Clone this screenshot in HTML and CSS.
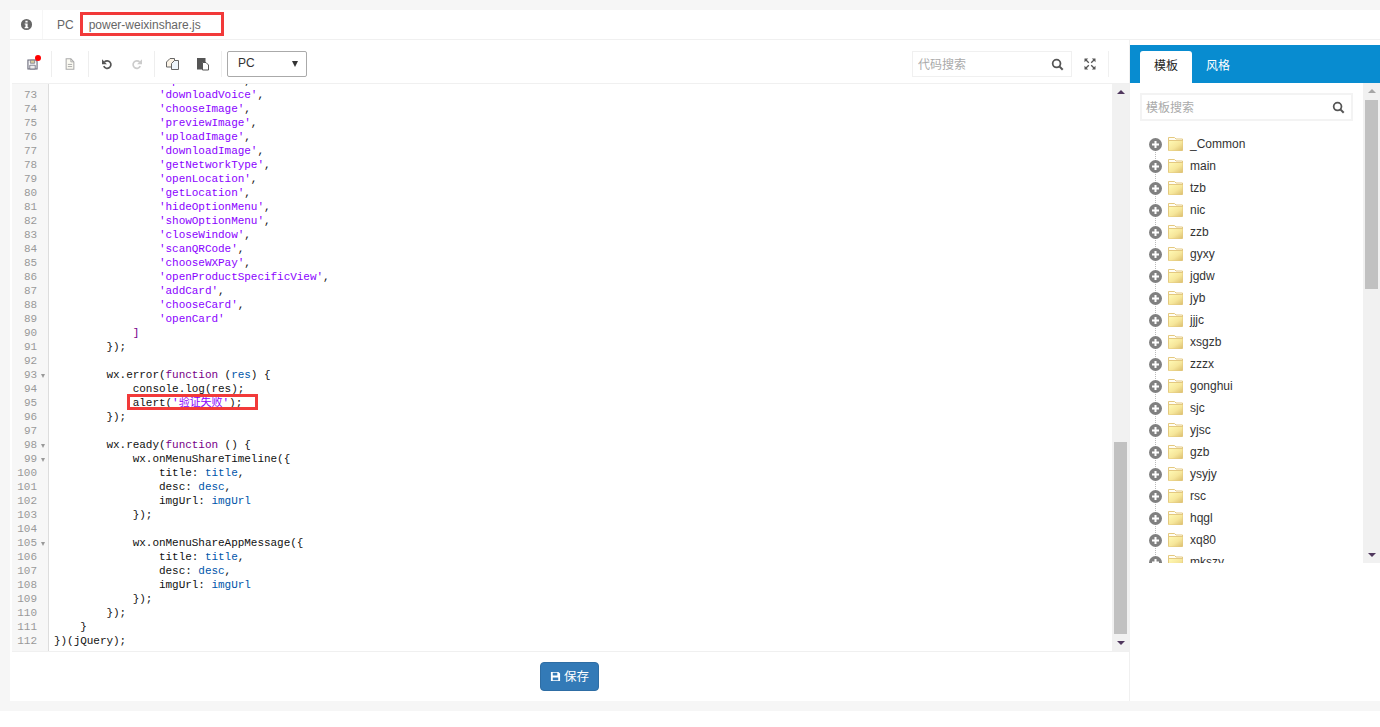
FILE: index.html
```html
<!DOCTYPE html>
<html lang="zh">
<head>
<meta charset="utf-8">
<title>power-weixinshare.js</title>
<link rel="stylesheet" href="styles.css">
</head>
<body>
<div class="page">
  <div class="card">
    <header class="topbar">
      <div class="info-cell">
        <svg class="ico-info" viewBox="0 0 14 14"><path fill="#666" fill-rule="evenodd" d="M7 1a6 6 0 1 1 0 12A6 6 0 0 1 7 1zM5.800 2.900v2h2.400v-2zM5 5.900v1.200h.9v2.600H5v1.400h4V9.700h-.8V5.900z"/></svg>
      </div>
      <span class="crumb">PC</span>
      <span class="crumb file">power-weixinshare.js</span>
    </header>
    <div class="body">
      <section class="left">
        <div class="toolbar">
          <div class="tgroup g-save">
            <span class="save-wrap">
              <svg class="ico-sm" viewBox="0 0 14 14"><path fill="#fff" stroke="#667" stroke-width="1.400" d="M1.200 1.200h9.800L12.800 3v9.800H1.200z"/><path fill="#d9cf9c" stroke="#778" d="M4.200 1.500h5.600v3.900H4.200z"/><path fill="#eee" stroke="#667" d="M3.500 7.900h7v4.800h-7z"/></svg>
              <i class="dot"></i>
            </span>
          </div>
          <div class="tgroup g-file">
            <svg class="ico-md" viewBox="0 0 14 14"><path fill="#fbfaf2" stroke="#aaa" stroke-width="1.200" d="M2.500 1h5.500l3.500 3.500V13h-9z"/><path fill="none" stroke="#aaa" stroke-width="1.100" d="M8 1v3.500h3.500M4.500 7.500h5M4.500 10h5"/></svg>
          </div>
          <div class="tgroup g-hist">
            <svg class="ico-md" viewBox="0 0 14 14"><path fill="none" stroke="#555" stroke-width="2" d="M4 4.600A4.400 4.400 0 1 1 3.200 9.600"/><path fill="#555" d="M1.200 1.500v5.700h5.700z"/></svg>
            <svg class="ico-md" viewBox="0 0 14 14"><path fill="none" stroke="#ccc" stroke-width="2" d="M10 4.600A4.400 4.400 0 1 0 10.800 9.600"/><path fill="#ccc" d="M12.800 1.500v5.700H7.100z"/></svg>
          </div>
          <div class="tgroup g-clip">
            <svg class="ico" viewBox="0 0 14 14"><path fill="#fbf3e6" stroke="#666" d="M.5 5l3.500-3.500h4.500V10H.5z"/><path fill="#eef5fb" stroke="#666" d="M5.500 6.500l3-3h4v9h-7z"/></svg>
            <svg class="ico" viewBox="0 0 14 14"><path fill="#555" d="M1 1h8.500v4H6.500v7.500H1z"/><path fill="#fff" stroke="#555" d="M6.500 5.500h3.500l2.500 2.500v5h-6z"/></svg>
          </div>
          <div class="select"><span class="lift">PC</span><i class="select-arrow"></i></div>
          <div class="spacer"></div>
          <div class="search code-search">
            <span class="ph">代码搜索</span>
            <svg class="ico-search" viewBox="0 0 14 14"><circle cx="6" cy="6" r="4.200" fill="none" stroke="#555" stroke-width="1.900"/><path stroke="#555" stroke-width="2.200" d="M9 9l3.600 3.600"/></svg>
          </div>
          <div class="expand">
            <svg class="ico-exp" viewBox="0 0 12 12"><path fill="#555" d="M.5.5h3.700L.5 4.200zM11.500.5v3.700L7.800.5zM.5 11.500V7.800l3.700 3.700zM11.500 11.500H7.800l3.700-3.700z"/><path stroke="#555" stroke-width="1.300" d="M2 2l2.800 2.800M10 2L7.200 4.800M2 10l2.800-2.800M10 10L7.200 7.200"/></svg>
          </div>
        </div>
        <div class="editor">
          <div class="lines">
<div class="row first"><span class="ln">72</span><span class="code">                <span class="s">'uploadVoice'</span>,</span></div>
<div class="row"><span class="ln">73</span><span class="code">                <span class="s">'downloadVoice'</span>,</span></div>
<div class="row"><span class="ln">74</span><span class="code">                <span class="s">'chooseImage'</span>,</span></div>
<div class="row"><span class="ln">75</span><span class="code">                <span class="s">'previewImage'</span>,</span></div>
<div class="row"><span class="ln">76</span><span class="code">                <span class="s">'uploadImage'</span>,</span></div>
<div class="row"><span class="ln">77</span><span class="code">                <span class="s">'downloadImage'</span>,</span></div>
<div class="row"><span class="ln">78</span><span class="code">                <span class="s">'getNetworkType'</span>,</span></div>
<div class="row"><span class="ln">79</span><span class="code">                <span class="s">'openLocation'</span>,</span></div>
<div class="row"><span class="ln">80</span><span class="code">                <span class="s">'getLocation'</span>,</span></div>
<div class="row"><span class="ln">81</span><span class="code">                <span class="s">'hideOptionMenu'</span>,</span></div>
<div class="row"><span class="ln">82</span><span class="code">                <span class="s">'showOptionMenu'</span>,</span></div>
<div class="row"><span class="ln">83</span><span class="code">                <span class="s">'closeWindow'</span>,</span></div>
<div class="row"><span class="ln">84</span><span class="code">                <span class="s">'scanQRCode'</span>,</span></div>
<div class="row"><span class="ln">85</span><span class="code">                <span class="s">'chooseWXPay'</span>,</span></div>
<div class="row"><span class="ln">86</span><span class="code">                <span class="s">'openProductSpecificView'</span>,</span></div>
<div class="row"><span class="ln">87</span><span class="code">                <span class="s">'addCard'</span>,</span></div>
<div class="row"><span class="ln">88</span><span class="code">                <span class="s">'chooseCard'</span>,</span></div>
<div class="row"><span class="ln">89</span><span class="code">                <span class="s">'openCard'</span></span></div>
<div class="row"><span class="ln">90</span><span class="code">            <span class="k">]</span></span></div>
<div class="row"><span class="ln">91</span><span class="code">        });</span></div>
<div class="row"><span class="ln">92</span><span class="code"> </span></div>
<div class="row"><span class="ln fold">93</span><span class="code">        wx.error(<span class="k">function</span> (<span class="v">res</span>) {</span></div>
<div class="row"><span class="ln">94</span><span class="code">            console.log(res);</span></div>
<div class="row"><span class="ln">95</span><span class="code">            alert(<span class="s">'验证失败'</span>);</span></div>
<div class="row"><span class="ln">96</span><span class="code">        });</span></div>
<div class="row"><span class="ln">97</span><span class="code"> </span></div>
<div class="row"><span class="ln fold">98</span><span class="code">        wx.ready(<span class="k">function</span> () {</span></div>
<div class="row"><span class="ln fold">99</span><span class="code">            wx.onMenuShareTimeline({</span></div>
<div class="row"><span class="ln">100</span><span class="code">                title: <span class="v">title</span>,</span></div>
<div class="row"><span class="ln">101</span><span class="code">                desc: <span class="v">desc</span>,</span></div>
<div class="row"><span class="ln">102</span><span class="code">                imgUrl: <span class="v">imgUrl</span></span></div>
<div class="row"><span class="ln">103</span><span class="code">            });</span></div>
<div class="row"><span class="ln">104</span><span class="code"> </span></div>
<div class="row"><span class="ln fold">105</span><span class="code">            wx.onMenuShareAppMessage({</span></div>
<div class="row"><span class="ln">106</span><span class="code">                title: <span class="v">title</span>,</span></div>
<div class="row"><span class="ln">107</span><span class="code">                desc: <span class="v">desc</span>,</span></div>
<div class="row"><span class="ln">108</span><span class="code">                imgUrl: <span class="v">imgUrl</span></span></div>
<div class="row"><span class="ln">109</span><span class="code">            });</span></div>
<div class="row"><span class="ln">110</span><span class="code">        });</span></div>
<div class="row"><span class="ln">111</span><span class="code">    }</span></div>
<div class="row"><span class="ln">112</span><span class="code">})(jQuery);</span></div>
<div class="row fill"><span class="ln"></span><span class="code"></span></div>
          </div>
          <div class="sbar sbar-code">
            <i class="arr up dark"></i>
            <div class="track"><div class="thumb"></div></div>
            <i class="arr down dark"></i>
          </div>
          <div class="mark"></div>
        </div>
        <footer class="foot">
          <button class="btn" type="button">
            <svg class="ico-btn" viewBox="0 0 12 12"><path fill="#fff" fill-rule="evenodd" d="M1 1h8.200L11 2.800V11H1zM3 2v3h5V2zM3 7v3h6V7z"/></svg><span class="lift">保存</span>
          </button>
        </footer>
      </section>
      <aside class="panel">
        <div class="tabs">
          <span class="tab on">模板</span>
          <span class="tab">风格</span>
        </div>
        <div class="tree-wrap">
          <div class="tree-main">
            <div class="search tree-search">
              <span class="ph">模板搜索</span>
              <svg class="ico-search" viewBox="0 0 14 14"><circle cx="6" cy="6" r="4.200" fill="none" stroke="#555" stroke-width="1.900"/><path stroke="#555" stroke-width="2.200" d="M9 9l3.600 3.600"/></svg>
            </div>
            <svg class="defs" width="0" height="0"><defs>
              <linearGradient id="fg" x1="0" y1="0" x2="1" y2="1"><stop offset="0" stop-color="#fff9b4"/><stop offset=".55" stop-color="#f6e69a"/><stop offset="1" stop-color="#dcc070"/></linearGradient>
              <symbol id="folder" viewBox="0 0 15 14"><path fill="#fffdf4" stroke="#e4c980" d="M.5 13.500V.5h6l1.500 1.500h6.500v11.500z"/><path fill="url(#fg)" d="M1 4h13.500v9.500H1z"/><path stroke="#e4c980" d="M1 3.500h13"/></symbol>
              <symbol id="plus" viewBox="0 0 13 13"><circle cx="6.500" cy="6.500" r="6.500" fill="#808080"/><path stroke="#fff" stroke-width="2" d="M6.500 3v7M3 6.500h7"/></symbol>
            </defs></svg>
            <ul class="tree">
              <li><svg class="plus"><use href="#plus"/></svg><svg class="folder"><use href="#folder"/></svg><span>_Common</span></li>
              <li><svg class="plus"><use href="#plus"/></svg><svg class="folder"><use href="#folder"/></svg><span>main</span></li>
              <li><svg class="plus"><use href="#plus"/></svg><svg class="folder"><use href="#folder"/></svg><span>tzb</span></li>
              <li><svg class="plus"><use href="#plus"/></svg><svg class="folder"><use href="#folder"/></svg><span>nic</span></li>
              <li><svg class="plus"><use href="#plus"/></svg><svg class="folder"><use href="#folder"/></svg><span>zzb</span></li>
              <li><svg class="plus"><use href="#plus"/></svg><svg class="folder"><use href="#folder"/></svg><span>gyxy</span></li>
              <li><svg class="plus"><use href="#plus"/></svg><svg class="folder"><use href="#folder"/></svg><span>jgdw</span></li>
              <li><svg class="plus"><use href="#plus"/></svg><svg class="folder"><use href="#folder"/></svg><span>jyb</span></li>
              <li><svg class="plus"><use href="#plus"/></svg><svg class="folder"><use href="#folder"/></svg><span>jjjc</span></li>
              <li><svg class="plus"><use href="#plus"/></svg><svg class="folder"><use href="#folder"/></svg><span>xsgzb</span></li>
              <li><svg class="plus"><use href="#plus"/></svg><svg class="folder"><use href="#folder"/></svg><span>zzzx</span></li>
              <li><svg class="plus"><use href="#plus"/></svg><svg class="folder"><use href="#folder"/></svg><span>gonghui</span></li>
              <li><svg class="plus"><use href="#plus"/></svg><svg class="folder"><use href="#folder"/></svg><span>sjc</span></li>
              <li><svg class="plus"><use href="#plus"/></svg><svg class="folder"><use href="#folder"/></svg><span>yjsc</span></li>
              <li><svg class="plus"><use href="#plus"/></svg><svg class="folder"><use href="#folder"/></svg><span>gzb</span></li>
              <li><svg class="plus"><use href="#plus"/></svg><svg class="folder"><use href="#folder"/></svg><span>ysyjy</span></li>
              <li><svg class="plus"><use href="#plus"/></svg><svg class="folder"><use href="#folder"/></svg><span>rsc</span></li>
              <li><svg class="plus"><use href="#plus"/></svg><svg class="folder"><use href="#folder"/></svg><span>hqgl</span></li>
              <li><svg class="plus"><use href="#plus"/></svg><svg class="folder"><use href="#folder"/></svg><span>xq80</span></li>
              <li><svg class="plus"><use href="#plus"/></svg><svg class="folder"><use href="#folder"/></svg><span>mkszy</span></li>
            </ul>
          </div>
          <div class="sbar sbar-tree">
            <i class="arr up"></i>
            <div class="track"><div class="thumb"></div></div>
            <i class="arr down dark"></i>
          </div>
        </div>
      </aside>
    </div>
    <div class="mark mark-file"></div>
  </div>
</div>
</body>
</html>
```
FILE: styles.css
```css
* { box-sizing: border-box; }
html, body { margin: 0; padding: 0; background: #fff; height: 727px; overflow: hidden; }
body { font-family: "Liberation Sans", "Noto Sans CJK SC", sans-serif; font-size: 12px; color: #333; }
.page { height: 711px; padding: 10px 0 10px 10px; background: #f6f6f6; }
.card { position: relative; height: 691px; background: #fff; display: flex; flex-direction: column; }

.topbar { height: 30px; flex: none; display: flex; align-items: center; border-bottom: 1px solid #f0f0f0; color: #666; }
.info-cell { width: 33px; height: 29px; display: flex; align-items: center; justify-content: center; border-right: 1px solid #f6f6f6; }
.ico-info { width: 13px; height: 13px; }
.crumb { margin-left: 14px; }
.crumb.file { margin-left: 15px; }
.mark { position: absolute; border: 3px solid #f23a3a; pointer-events: none; }
.mark-file { left: 70px; top: 2px; width: 144px; height: 24px; }

.body { flex: 1; min-height: 0; display: flex; }
.left { width: 1120px; flex: none; display: flex; flex-direction: column; border-right: 1px solid #f0f0f0; }

.toolbar { height: 44px; flex: none; display: flex; align-items: flex-start; padding-top: 11px; margin-left: 2px; border-bottom: 1px solid #f0f0f0; }
.tgroup { height: 26px; display: flex; align-items: center; justify-content: center; border-right: 1px solid #eee; }
.g-save { width: 40px; }
.g-file { width: 37px; }
.g-hist { width: 66px; gap: 18px; }
.g-clip { width: 67px; gap: 16px; }
.ico { width: 14px; height: 14px; display: block; }
.ico-md { width: 12px; height: 12px; display: block; }
.ico-sm { width: 11px; height: 11px; display: block; }
.save-wrap { position: relative; display: block; margin-left: 2px; }
.dot { position: absolute; width: 6px; height: 6px; right: -3px; top: -4px; border-radius: 50%; background: #f00; }
.select { width: 80px; height: 26px; margin-left: 5px; padding: 0 8px 0 10px; display: flex; align-items: center; justify-content: space-between; border: 1px solid #aaa; border-radius: 2px; color: #333; }
.select-arrow { width: 0; height: 0; border-left: 3.500px solid transparent; border-right: 3.500px solid transparent; border-top: 6px solid #333; }
.spacer { flex: 1; }
.search { display: flex; align-items: center; justify-content: space-between; border: 1px solid #f0f0f0; }
.ph { color: #aaa; position: relative; top: -1px; }
.lift { position: relative; top: -1px; }
.code-search { width: 160px; height: 26px; padding: 0 7px 0 5px; }
.ico-search { width: 13px; height: 13px; }
.expand { width: 37px; height: 26px; display: flex; align-items: center; justify-content: center; border-right: 1px solid #f0f0f0; margin-right: 20px; }
.ico-exp { width: 12px; height: 12px; }

.editor { position: relative; flex: 1; min-height: 0; display: flex; margin-left: 2px; border-bottom: 1px solid #f0f0f0; overflow: hidden; }
.lines { flex: 1; min-width: 0; display: flex; flex-direction: column; font-family: "Liberation Mono", "Noto Sans CJK SC", monospace; font-size: 11px; letter-spacing: -.04px; line-height: 14px; color: #111; }
.row { display: flex; height: 14px; flex: none; }
.row.first { margin-top: -10px; }
.row.fill { flex: 1; }
.ln { position: relative; width: 37px; flex: none; padding-right: 11px; text-align: right; background: #f7f7f7; border-right: 1px solid #ddd; color: #999; }
.ln.fold::after { content: ""; position: absolute; left: 29px; top: 6px; width: 0; height: 0; border-left: 2.500px solid transparent; border-right: 2.500px solid transparent; border-top: 4px solid #999; }
.code { padding-left: 5px; white-space: pre; }
.s { color: #8a00ff; }
.k { color: #708; }
.v { color: #05a; }
.editor > .mark { left: 115px; top: 310px; width: 131px; height: 16px; }

.sbar { width: 17px; flex: none; background: #f1f1f1; display: flex; flex-direction: column; align-items: center; }
.arr { width: 0; height: 0; flex: none; border-left: 4px solid transparent; border-right: 4px solid transparent; margin: 6px 0; }
.arr.up { border-bottom: 4px solid #a6a6a6; margin-bottom: 7px; }
.arr.down { border-top: 4px solid #a6a6a6; margin-top: 7px; }
.arr.up.dark { border-bottom-color: #50385e; }
.arr.down.dark { border-top-color: #50385e; }
.track { flex: 1; width: 13px; display: flex; flex-direction: column; }
.sbar-code .track { justify-content: flex-end; }
.sbar-code .thumb { height: 192px; background: #c1c1c1; }
.sbar-tree .thumb { height: 189px; background: #c1c1c1; }

.foot { height: 49px; flex: none; display: flex; justify-content: center; padding-top: 10px; }
.btn { width: 59px; height: 29px; display: flex; align-items: center; justify-content: center; gap: 3px; padding: 0; border: 1px solid #2e6da4; border-radius: 4px; background: #337ab7; color: #fff; font: 12.500px "Liberation Sans", "Noto Sans CJK SC", sans-serif; }
.ico-btn { width: 11px; height: 11px; }

.panel { flex: 1; min-width: 0; padding-top: 5px; display: flex; flex-direction: column; align-items: stretch; }
.tabs { height: 38px; flex: none; background: #088cd0; display: flex; align-items: flex-end; padding-left: 10px; }
.tab { width: 52px; height: 32px; padding-bottom: 6px; display: flex; align-items: center; justify-content: center; color: #fff; border-radius: 3px 3px 0 0; }
.tab.on { background: #fff; color: #222; }
.tree-wrap { height: 480px; flex: none; display: flex; }
.tree-main { flex: 1; min-width: 0; overflow: hidden; padding: 10px 10px 0; }
.tree-search { height: 28px; padding: 0 6px 0 4px; border-width: 2px; border-color: #f3f3f3; border-style: solid; }
.defs { position: absolute; }
.tree { list-style: none; margin: 12px 0 0; padding: 0 0 0 9px; }
.tree li { position: relative; height: 22px; display: flex; align-items: center; color: #333; }
.tree li::before { content: ""; position: absolute; left: 6px; top: 16px; height: 12px; border-left: 1px dotted #bbb; }
.plus { width: 13px; height: 13px; flex: none; margin-top: 1px; position: relative; }
.folder { width: 15px; height: 14px; flex: none; margin-left: 6px; margin-right: 7px; }
```
